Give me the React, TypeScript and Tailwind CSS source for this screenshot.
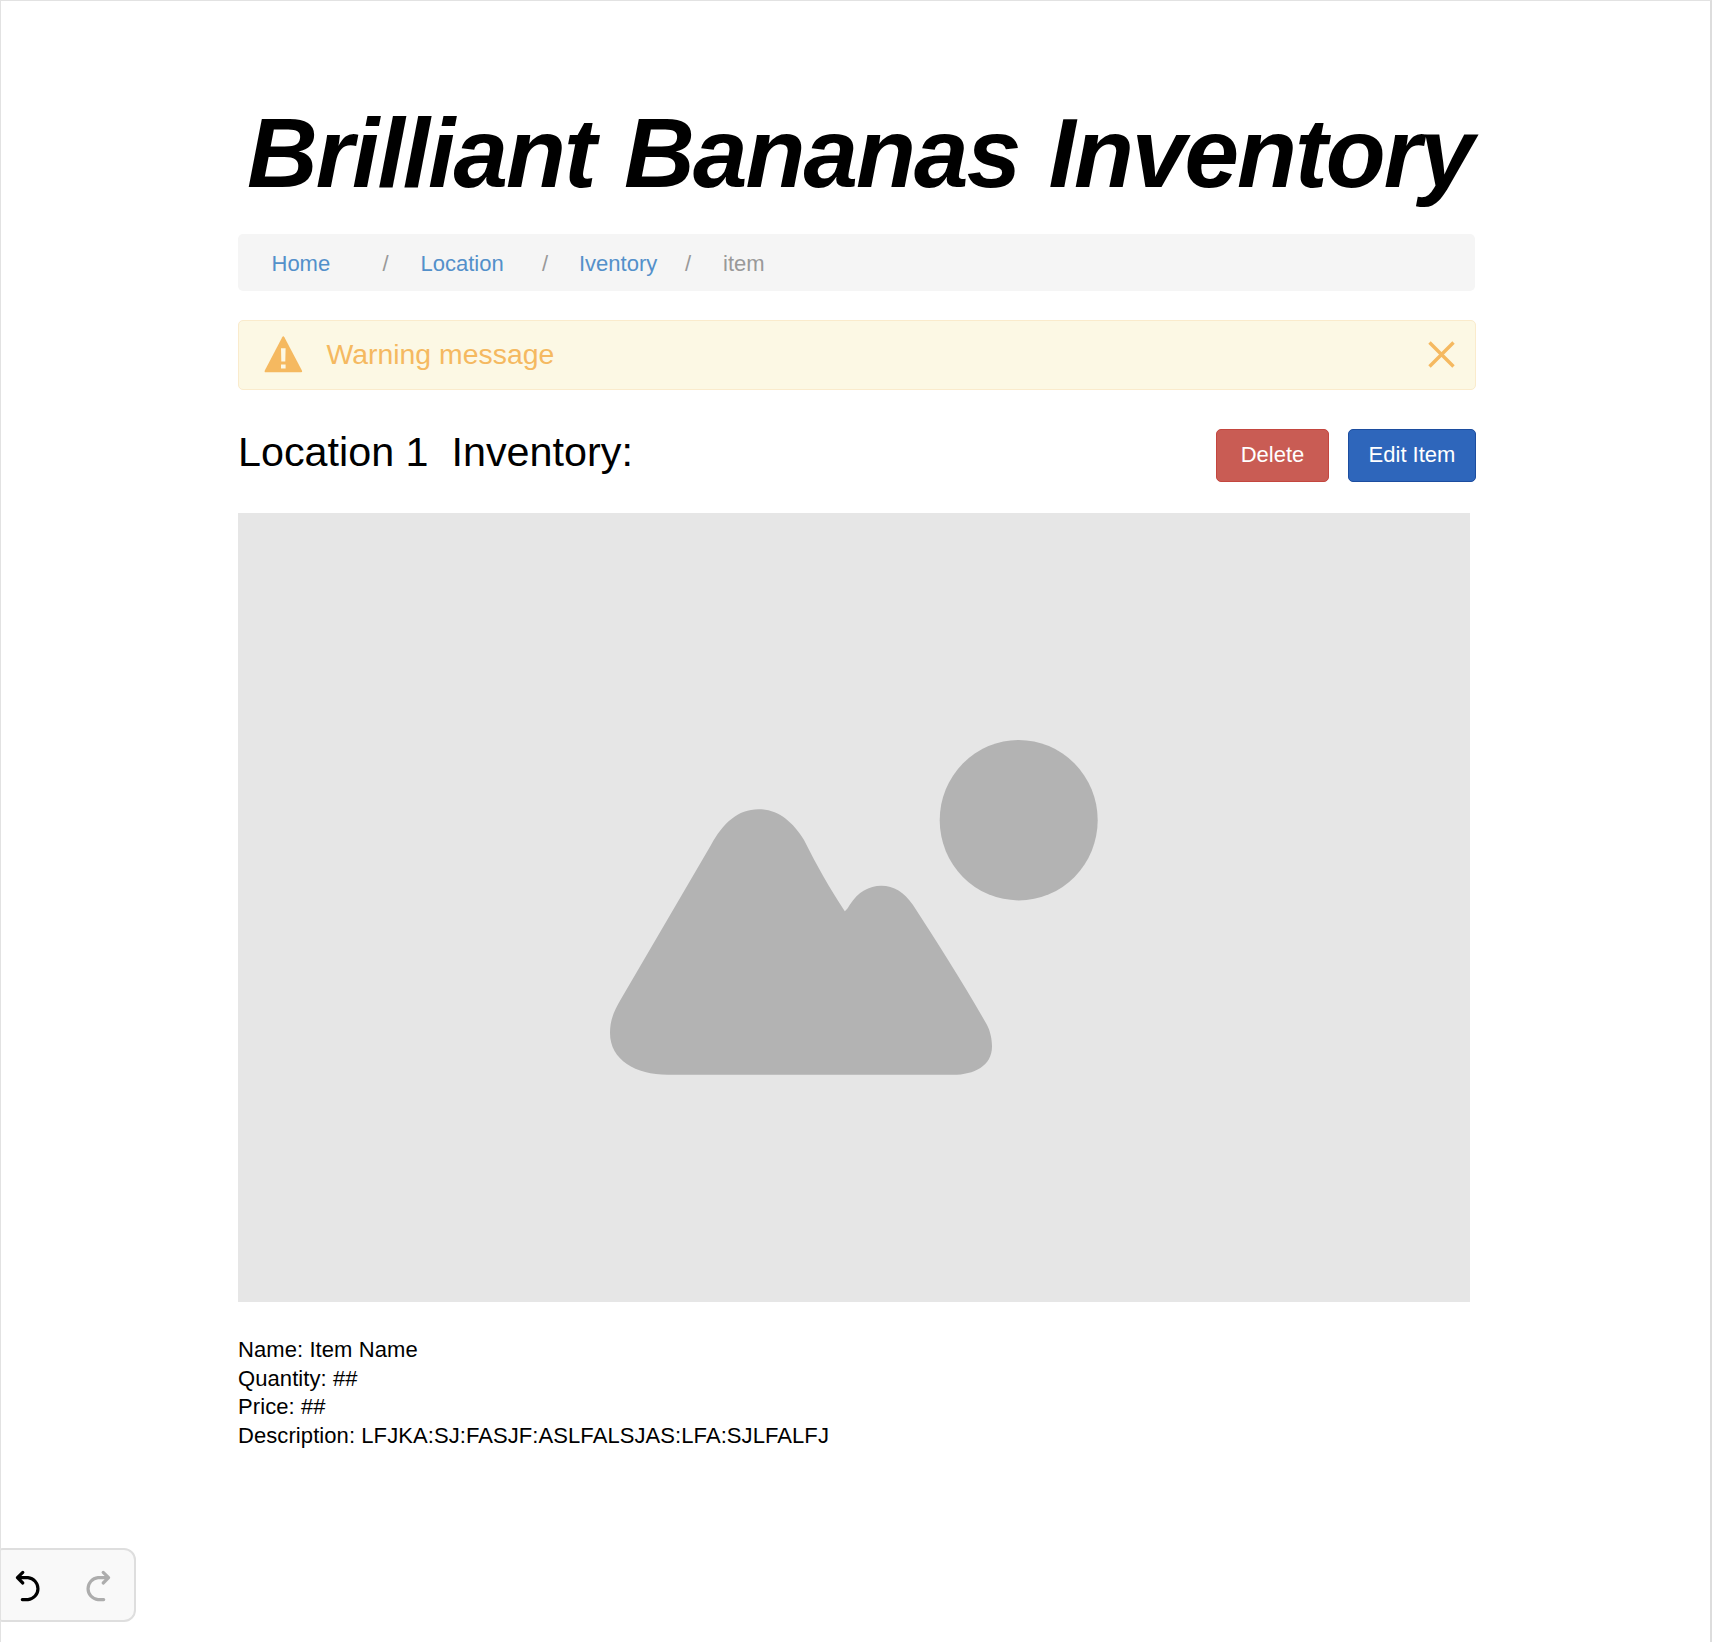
const crumbs = [
  { label: "Home", width: "w-[111px]", gap: "w-[38px]" },
  { label: "Location", width: "w-[121.5px]", gap: "w-[37px]" },
  { label: "Iventory", width: "w-[106px]", gap: "w-[38px]" },
];

const details = [
  "Name: Item Name",
  "Quantity: ##",
  "Price: ##",
  "Description: LFJKA:SJ:FASJF:ASLFALSJAS:LFA:SJLFALFJ",
];

function WarningIcon() {
  return (
    <svg viewBox="0 0 39 37" className="h-[37px] w-[39px] shrink-0">
      <path
        d="M18.2 1.2Q19.3-.7 20.4 1.2L37.9 34.6Q38.7 36.3 37 36.3H1.8Q.1 36.3.8 34.6Z"
        fill="#f5b960"
      />
      <path d="M17 12.2h4.6l-.3 13.3h-4zM17 28.5h4.6v4h-4.600z" fill="#fcf8e4" />
    </svg>
  );
}

function PlaceholderImage() {
  return (
    <svg viewBox="238 513 1232 789" className="block h-full w-full" fill="#b3b3b3">
      <ellipse cx="1018.7" cy="820.2" rx="79" ry="80.2" />
      <path d="M667.5 1074.8C636 1074.8 610 1060 610 1033C610 1020 614 1011 621 999L711 845C723 823 738 809.2 758.5 809.2C778 809.2 793 822 804 840C817 866 830 889 844.8 911.2C847 909.5 848.5 907 850 904.5C858 892 869 885.7 881.3 885.7C894 885.7 904 892 913 905C939 945 963 983 986.5 1024C990.5 1031 992 1040 992 1046.5C992 1066 974 1074.8 953.3 1074.8Z" />
    </svg>
  );
}

function UndoIcon({ className }: { className: string }) {
  return (
    <svg
      viewBox="0 0 26 32"
      className={className}
      fill="none"
      stroke="currentColor"
      strokeWidth="3.2"
      strokeLinecap="round"
      strokeLinejoin="round"
    >
      <path d="M7.8 3.4L2.4 8.7L7.8 14M3 8.7H13A11 11 0 0 1 13 30.6H7.3" />
    </svg>
  );
}

export default function App() {
  return (
    <div className="relative h-[1642px] w-[1712px] overflow-hidden border-t border-r-2 border-l border-t-[#e2e2e2] border-r-[#dddddd] border-l-[#e2e2e2] bg-white font-['Liberation_Sans',Arial,sans-serif] text-[22px] text-black">
      <main className="ml-[237px] w-[1238px] pt-[99px]">
        <h1 className="h-[134px] pl-[9px] text-[98px] leading-[106px] font-bold tracking-[-1.9px] whitespace-nowrap italic [word-spacing:4px]">
          Brilliant Bananas Inventory
        </h1>

        <nav className="flex h-[57px] w-[1237px] items-center rounded-[5px] bg-[#f5f5f5] pt-[2px] pl-[33.5px] leading-[28px] text-[#999999]">
          {crumbs.map((c) => (
            <div key={c.label} className="flex">
              <a className={`${c.width} text-[#5390ca]`}>{c.label}</a>
              <span className={c.gap}>/</span>
            </div>
          ))}
          <span>item</span>
        </nav>

        <section className="mt-[29px] flex h-[70px] items-center rounded-[5px] border border-[#faebcc] bg-[#fcf8e4] pr-[20px] pb-[2px] pl-[25px] text-[28.4px] text-[#f5b960]">
          <WarningIcon />
          <span className="ml-[23.5px] leading-[36px]">Warning message</span>
          <svg
            viewBox="0 0 27 27"
            className="ml-auto h-[27px] w-[27px]"
            stroke="currentColor"
            strokeWidth="3.4"
          >
            <path d="M1.5 1.5L25.5 25.5M25.5 1.5L1.5 25.5" />
          </svg>
        </section>

        <header className="mt-[39px] flex h-[53px] items-start justify-between">
          <h2 className="text-[41.3px] leading-[47px] whitespace-pre">Location 1  Inventory:</h2>
          <div className="flex gap-[19px]">
            <button className="h-[53px] w-[113px] rounded-[5px] border border-[#c4463f] bg-[#c95c54] pb-[2px] text-white">
              Delete
            </button>
            <button className="h-[53px] w-[128px] rounded-[5px] border border-[#1c4d9f] bg-[#2e66bb] pb-[2px] text-white">
              Edit Item
            </button>
          </div>
        </header>

        <div className="mt-[31px] h-[789px] w-[1232px] bg-[#e6e6e6]">
          <PlaceholderImage />
        </div>

        <div className="mt-[34px] leading-[28.7px] tracking-[0.08px]">
          {details.map((line) => (
            <p key={line}>{line}</p>
          ))}
        </div>
      </main>

      <div className="absolute top-[1547px] -left-[10px] flex h-[74px] w-[145px] items-center rounded-[12px] border-2 border-[#dedede] bg-[#f9f9f9] pl-[22px]">
        <UndoIcon className="h-[32px] w-[26px] overflow-visible text-black" />
        <UndoIcon className="ml-[43.5px] h-[32px] w-[26px] -scale-x-100 overflow-visible text-[#adadad]" />
      </div>
    </div>
  );
}
